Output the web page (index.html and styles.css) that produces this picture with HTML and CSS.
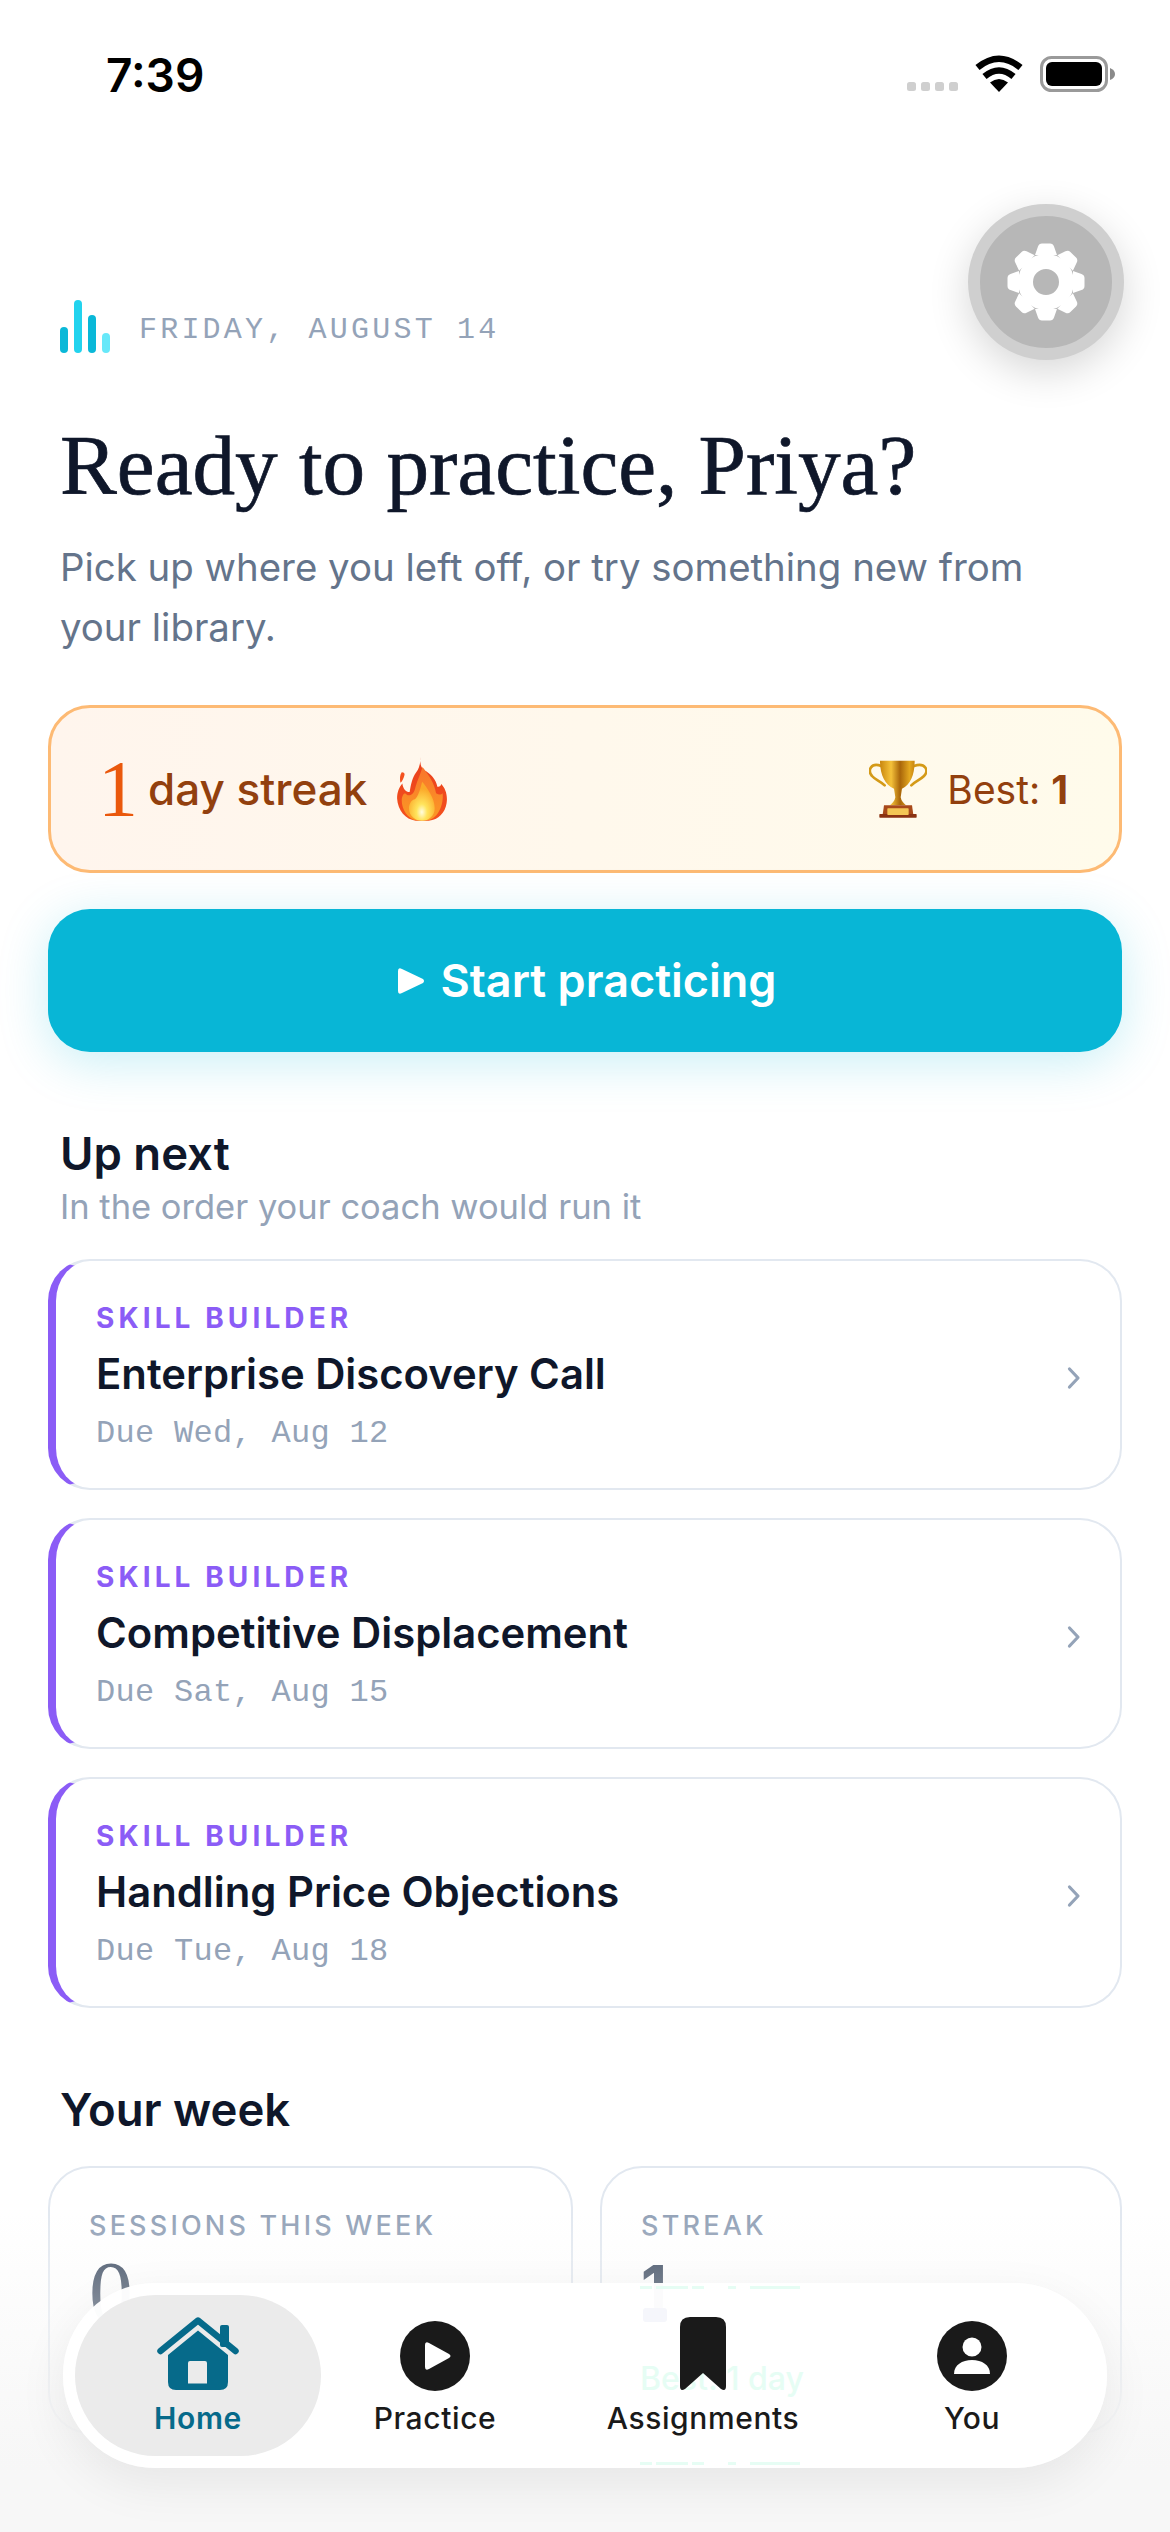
FILE: index.html
```html
<!DOCTYPE html>
<html lang="en">
<head>
    <meta charset="UTF-8">
    <meta name="viewport" content="width=device-width, initial-scale=1.0">
    <title>Home</title>
    <link rel="stylesheet" href="styles.css">
</head>
<body>

    <div class="screen">
        <!-- Status bar -->
        <div class="status-bar">
            <div class="time">7:39</div>
            <div class="status-icons">
                <svg class="signal" width="51" height="9" viewBox="0 0 51 9"><rect x="0" width="9" height="9" rx="2.5"/><rect x="14" width="9" height="9" rx="2.5"/><rect x="28" width="9" height="9" rx="2.5"/><rect x="42" width="9" height="9" rx="2.5"/></svg>
                <svg class="wifi" width="48" height="37" viewBox="0 0 48 37"><path d="M24 37 L15 27.5 Q24 20.5 33 27.5 Z" fill="#000"/><path d="M9.5 21.5 Q24 9.5 38.5 21.5" fill="none" stroke="#000" stroke-width="6.5"/><path d="M2.5 12.5 Q24 -5 45.5 12.5" fill="none" stroke="#000" stroke-width="6.5"/></svg>
                <svg class="battery" width="75" height="36" viewBox="0 0 75 36"><rect x="1.5" y="1.5" width="65" height="33" rx="10" fill="none" stroke="#9a9a9a" stroke-width="3"/><rect x="6" y="6" width="56" height="24" rx="6" fill="#000"/><path d="M70 12 Q75 14 75 18 Q75 22 70 24 Z" fill="#8a8a8a"/></svg>
            </div>
        </div>

        <div class="container">
            <div class="date-row">
                <div class="bars">
                    <span class="bar bar-a"></span>
                    <span class="bar bar-b"></span>
                    <span class="bar bar-c"></span>
                    <span class="bar bar-d"></span>
                </div>
                <div class="date">FRIDAY, AUGUST 14</div>
            </div>

            <h1>Ready to practice, Priya?</h1>
            <p class="intro">Pick up where you left off, or try something new from your library.</p>

            <!-- Streak -->
            <div class="streak">
                <div class="streak-left">
                    <span class="streak-num">1</span>
                    <span class="streak-text">day streak</span>
                    <svg class="fire" width="51" height="64" viewBox="55 50 152 194">
                        <defs>
                            <linearGradient id="flameOuter" x1="0" y1="0" x2="0" y2="1"><stop offset="0" stop-color="#e9401c"/><stop offset="1" stop-color="#f4511e"/></linearGradient>
                            <linearGradient id="flameMid" x1="0" y1="0" x2="0" y2="1"><stop offset="0" stop-color="#f8742c"/><stop offset="1" stop-color="#fb9a24"/></linearGradient>
                            <radialGradient id="flameCore" cx="0.5" cy="0.78" r="0.6"><stop offset="0" stop-color="#fffde0"/><stop offset="0.35" stop-color="#ffe45c"/><stop offset="1" stop-color="#fba92a"/></radialGradient>
                        </defs>
                        <path d="M126 50 C122 68 126 82 136 90 C156 100 172 118 176 140 C182 142 186 138 188 132 C200 145 208 165 204 190 C200 218 180 240 150 243 L110 243 C80 240 56 212 54 176 C54 156 60 142 70 130 C72 146 80 156 92 156 C96 132 100 112 112 96 C122 84 124 68 126 50Z" fill="url(#flameOuter)"/>
                        <path d="M68 96 C76 96 78 100 76 106 C74 114 70 124 64 128 C62 116 62 104 68 96Z" fill="#f4511e"/>
                        <path d="M131 80 C150 105 168 130 172 160 C180 165 188 165 192 160 C196 195 178 236 148 242 L112 242 C86 236 68 210 68 180 C70 165 76 155 84 165 C96 170 106 160 110 140 C116 118 126 100 131 80Z" fill="url(#flameMid)"/>
                        <path d="M130 125 C146 145 168 175 168 205 C168 228 150 243 130 243 C108 243 90 228 90 205 C90 190 100 178 108 178 C118 170 124 148 130 125Z" fill="url(#flameCore)"/>
                    </svg>
                </div>
                <div class="streak-right">
                    <svg class="trophy" width="58" height="58" viewBox="55 60 174 174">
                        <defs>
                            <linearGradient id="cupGold" x1="0" y1="0" x2="1" y2="0"><stop offset="0" stop-color="#c9860e"/><stop offset="0.32" stop-color="#f5c23a"/><stop offset="0.58" stop-color="#a9660a"/><stop offset="0.85" stop-color="#e3a71f"/><stop offset="1" stop-color="#c9860e"/></linearGradient>
                        </defs>
                        <path d="M92 78 C60 66 50 92 64 108 C74 120 90 124 102 136" fill="none" stroke="#d49a17" stroke-width="8" stroke-linecap="round"/>
                        <path d="M190 78 C224 66 236 92 220 108 C208 120 194 124 182 136" fill="none" stroke="#d49a17" stroke-width="8" stroke-linecap="round"/>
                        <path d="M88 62 L192 62 C192 104 180 134 154 146 L150 172 C152 184 160 190 166 196 L118 196 C124 190 132 184 134 172 L130 146 C102 134 88 104 88 62Z" fill="url(#cupGold)"/>
                        <path d="M100 196 H184 L188 224 H96 Z" fill="#a8491a"/>
                        <rect x="86" y="222" width="112" height="11" rx="2" fill="#8a3212"/>
                        <rect x="110" y="205" width="64" height="20" rx="2" fill="#f3c655"/>
                    </svg>
                    <span class="best">Best: <b>1</b></span>
                </div>
            </div>

            <button class="start-btn">
                <svg width="28" height="28" viewBox="0 0 28 28"><path d="M1 4 Q1 0 5 2 L26 12 Q28 14 26 16 L5 26 Q1 28 1 24 Z" fill="#fff"/></svg>
                Start practicing
            </button>

            <!-- Up next -->
            <h2 class="upnext-title">Up next</h2>
            <div class="upnext-sub">In the order your coach would run it</div>

            <div class="task-list">
                <div class="task">
                    <div>
                        <div class="task-kind">SKILL BUILDER</div>
                        <div class="task-name">Enterprise Discovery Call</div>
                        <div class="task-due">Due Wed, Aug 12</div>
                    </div>
                    <svg class="chev" width="14" height="24" viewBox="0 0 14 24"><path d="M2.5 3 L11 12 L2.5 21" fill="none" stroke="#94a3b8" stroke-width="3.2" stroke-linecap="round" stroke-linejoin="round"/></svg>
                </div>
                <div class="task">
                    <div>
                        <div class="task-kind">SKILL BUILDER</div>
                        <div class="task-name">Competitive Displacement</div>
                        <div class="task-due">Due Sat, Aug 15</div>
                    </div>
                    <svg class="chev" width="14" height="24" viewBox="0 0 14 24"><path d="M2.5 3 L11 12 L2.5 21" fill="none" stroke="#94a3b8" stroke-width="3.2" stroke-linecap="round" stroke-linejoin="round"/></svg>
                </div>
                <div class="task">
                    <div>
                        <div class="task-kind">SKILL BUILDER</div>
                        <div class="task-name">Handling Price Objections</div>
                        <div class="task-due">Due Tue, Aug 18</div>
                    </div>
                    <svg class="chev" width="14" height="24" viewBox="0 0 14 24"><path d="M2.5 3 L11 12 L2.5 21" fill="none" stroke="#94a3b8" stroke-width="3.2" stroke-linecap="round" stroke-linejoin="round"/></svg>
                </div>
            </div>

            <!-- Your week -->
            <h2 class="week-title">Your week</h2>
            <div class="week-grid">
                <div class="stat">
                    <div class="stat-label">SESSIONS THIS WEEK</div>
                    <div class="stat-value stat-serif">0</div>
                </div>
                <div class="stat">
                    <div class="stat-label">STREAK</div>
                    <div class="stat-value">1</div>
                </div>
            </div>
        </div>

        <!-- Settings button -->
        <button class="settings" aria-label="Settings">
            <svg width="80" height="80" viewBox="-40 -40 80 80">
                <defs><path id="tooth" d="M-11 -27 L-8 -35.500 Q-7 -38.500 -4 -38.500 L4 -38.500 Q7 -38.500 8 -35.500 L11 -27 Z" fill="#fff"/></defs>
                <use href="#tooth"/>
                <use href="#tooth" transform="rotate(45)"/>
                <use href="#tooth" transform="rotate(90)"/>
                <use href="#tooth" transform="rotate(135)"/>
                <use href="#tooth" transform="rotate(180)"/>
                <use href="#tooth" transform="rotate(225)"/>
                <use href="#tooth" transform="rotate(270)"/>
                <use href="#tooth" transform="rotate(315)"/>
                <circle r="20.500" fill="none" stroke="#fff" stroke-width="15"/>
            </svg>
        </button>

        <div class="bottom-fade"></div>

        <!-- Tab bar -->
        <nav class="tabbar">
            <svg class="ghost-slice ghost-top" width="162" height="3" viewBox="0 0 162 3"><path d="M0 0h12v3H0zM16 0h32v3H16zM52 0h12v3H52zM88 0h8v3h-8zM110 0h50v3h-50z"/></svg>
            <div class="ghost-chip"></div>
            <div class="ghost">Best: 1 day</div>
            <svg class="ghost-slice ghost-bottom" width="162" height="3" viewBox="0 0 162 3"><path d="M0 0h12v3H0zM16 0h32v3H16zM52 0h12v3H52zM88 0h8v3h-8zM110 0h50v3h-50z"/></svg>

            <a class="tab active">
                <svg width="82" height="74" viewBox="0 0 82 74">
                    <rect x="63" y="8" width="9" height="22" rx="2" fill="#066a8a"/>
                    <path d="M3.500 34 L41 3.500 L78.500 34" fill="none" stroke="#066a8a" stroke-width="6.500" stroke-linecap="round" stroke-linejoin="round"/>
                    <path d="M41 13.500 L71 38 V65 Q71 73 63 73 H19 Q11 73 11 65 V38 Z M33 44 Q31 44 31 46 V66.500 H50 V46 Q50 44 48 44 Z" fill="#066a8a" fill-rule="evenodd"/>
                </svg>
                <span>Home</span>
            </a>
            <a class="tab">
                <svg width="70" height="70" viewBox="0 0 70 70"><circle cx="35" cy="35" r="35" fill="#1a1a1a"/><path d="M25 24 Q25 20 29 22 L49 33 Q52 35 49 37 L29 48 Q25 50 25 46 Z" fill="#fff"/></svg>
                <span>Practice</span>
            </a>
            <a class="tab">
                <svg width="46" height="74" viewBox="0 0 46 74"><path d="M0 10 Q0 0 10 0 H36 Q46 0 46 10 V69 Q46 75 41 72 L23 56 L5 72 Q0 75 0 69 Z" fill="#1a1a1a"/></svg>
                <span>Assignments</span>
            </a>
            <a class="tab">
                <svg width="70" height="70" viewBox="0 0 70 70"><circle cx="35" cy="35" r="35" fill="#1a1a1a"/><circle cx="35" cy="26" r="9.500" fill="#fff"/><path d="M17 53 C17 44 25 39 35 39 C45 39 53 44 53 53 Z" fill="#fff"/></svg>
                <span>You</span>
            </a>
        </nav>
    </div>

</body>
</html>
```

FILE: styles.css
```css
* {
    margin: 0;
    padding: 0;
    box-sizing: border-box;
    font-family: Inter, "Noto Sans", sans-serif;
}

body {
    background-color: #fff;
}

.screen {
    position: relative;
    width: 1170px;
    height: 2532px;
    overflow: hidden;
    background: #fff;
}

/* Status bar */
.status-bar {
    display: flex;
    justify-content: space-between;
    align-items: flex-start;
    height: 140px;
    padding: 50px 55px 0 106px;
}

.time {
    font-size: 46px;
    font-weight: 600;
    line-height: 50px;
    color: #000;
}

.status-icons {
    display: flex;
    align-items: flex-end;
    gap: 17px;
    padding-top: 5px;
}

.signal {
    fill: #cfcfcf;
    margin-bottom: 1px;
}

.container {
    padding: 0 48px;
}

/* Heading */
.date-row {
    display: flex;
    align-items: flex-end;
    height: 60px;
    margin-top: 153px;
    padding-left: 12px;
}

.bars {
    display: flex;
    align-items: flex-end;
    gap: 6px;
    height: 54px;
}

.bar {
    width: 8px;
    border-radius: 4px;
}

.bar-a { height: 26px; background: #0ab8d8; }
.bar-b { height: 53px; background: #22d3ee; }
.bar-c { height: 38px; background: #0ab8d8; }
.bar-d { height: 20px; background: #67e8f9; }

.date {
    margin-left: 29px;
    margin-bottom: 3px;
    font-family: "Liberation Mono", monospace;
    font-size: 30px;
    letter-spacing: 3.2px;
    line-height: 40px;
    color: #94a3b8;
}

h1 {
    margin-top: 62px;
    padding-left: 12px;
    font-family: "Liberation Serif", serif;
    font-size: 85.2px;
    font-weight: 400;
    line-height: 100px;
    color: #0f172a;
    -webkit-text-stroke: 0.7px #0f172a;
}

.intro {
    margin-top: 22px;
    padding: 0 80px 0 12px;
    font-size: 38.4px;
    line-height: 60px;
    color: #64748b;
}

/* Streak card */
.streak {
    display: flex;
    justify-content: space-between;
    align-items: center;
    height: 168px;
    margin-top: 48px;
    padding: 0 51px 0 47px;
    border: 3px solid #fdba74;
    border-radius: 42px;
    background: linear-gradient(to right, #fff5ed, #fffbeb);
}

.streak-left, .streak-right {
    display: flex;
    align-items: center;
}

.streak-num {
    font-family: "Liberation Serif", serif;
    font-size: 80px;
    line-height: 90px;
    color: #ea580c;
}

.streak-text {
    margin-left: 10px;
    font-size: 44px;
    font-weight: 500;
    color: #92400e;
}

.fire {
    margin-left: 30px;
}

.best {
    margin-left: 20px;
    font-size: 39px;
    color: #92400e;
}

.best b {
    font-weight: 700;
}

/* Main button */
.start-btn {
    display: flex;
    justify-content: center;
    align-items: center;
    gap: 15px;
    width: 100%;
    height: 143px;
    margin-top: 36px;
    padding-left: 4px;
    border: none;
    border-radius: 42px;
    background-color: #08b6d6;
    box-shadow: 0 10px 50px rgba(6, 182, 212, 0.22);
    color: white;
    font-size: 45px;
    font-weight: 600;
}

/* Up next */
.upnext-title, .week-title {
    padding-left: 12px;
    font-size: 45.5px;
    font-weight: 600;
    line-height: 56px;
    color: #0f172a;
}

.upnext-title {
    margin-top: 74px;
}

.upnext-sub {
    padding-left: 12px;
    margin-top: 3px;
    font-size: 34.5px;
    line-height: 44px;
    color: #94a3b8;
}

.task-list {
    display: flex;
    flex-direction: column;
    gap: 28px;
    margin-top: 30px;
}

.task {
    display: flex;
    justify-content: space-between;
    align-items: center;
    height: 231px;
    padding: 6px 39px 0 40px;
    border: 2px solid #e2e8f0;
    border-left: 8px solid #8b5cf6;
    border-radius: 42px;
    background: white;
}

.task-kind {
    font-size: 28px;
    font-weight: 700;
    letter-spacing: 4.1px;
    line-height: 34px;
    color: #8b5cf6;
}

.task-name {
    margin-top: 13px;
    font-size: 41.8px;
    font-weight: 600;
    line-height: 52px;
    color: #0f172a;
}

.task-due {
    margin-top: 14px;
    font-family: "Liberation Mono", monospace;
    font-size: 32px;
    letter-spacing: 0.3px;
    line-height: 40px;
    color: #94a3b8;
}

/* Your week */
.week-title {
    margin-top: 74px;
}

.week-grid {
    display: grid;
    grid-template-columns: 525px 522px;
    gap: 27px;
    margin-top: 28px;
}

.stat {
    height: 268px;
    padding: 41px 39px;
    border: 2px solid #e2e8f0;
    border-radius: 42px;
    background: white;
}

.stat-label {
    font-size: 27px;
    font-weight: 500;
    letter-spacing: 3.2px;
    line-height: 34px;
    color: #94a3b8;
}

.stat-value {
    margin-top: 10px;
    font-size: 60px;
    font-weight: 700;
    line-height: 68px;
    color: #3b4a60;
}

.stat-serif {
    margin-top: 5px;
    font-family: "Liberation Serif", serif;
    font-weight: 400;
    font-size: 88px;
    line-height: 90px;
}

/* Floating items */
.settings {
    position: absolute;
    top: 204px;
    left: 968px;
    display: flex;
    justify-content: center;
    align-items: center;
    width: 156px;
    height: 156px;
    border: 12px solid #cfcfcf;
    border-radius: 50%;
    background: #b7b7b7;
    box-shadow: 0 12px 40px rgba(0, 0, 0, 0.16);
}

.bottom-fade {
    position: absolute;
    left: 0;
    right: 0;
    bottom: 0;
    height: 400px;
    background: linear-gradient(to bottom, rgba(247, 247, 247, 0) 20%, rgba(247, 247, 247, 0.25) 35%, rgba(247, 247, 247, 0.9) 75%, #f7f7f7 85%);
}

.tabbar {
    position: absolute;
    left: 63px;
    top: 2283px;
    display: grid;
    grid-template-columns: 246px 228px 308px 230px;
    width: 1044px;
    height: 185px;
    padding: 12px;
    border-radius: 92px;
    background: rgba(255, 255, 255, 0.97);
    box-shadow: 0 16px 50px rgba(0, 0, 0, 0.07);
}

.tab {
    position: relative;
    display: flex;
    flex-direction: column;
    justify-content: flex-end;
    align-items: center;
    height: 161px;
    padding-bottom: 18px;
    border-radius: 81px;
    font-size: 30px;
    font-weight: 450;
    letter-spacing: 0.6px;
    line-height: 40px;
    color: #1a1a1a;
}

.tab svg {
    margin-bottom: 7px;
}

.tab.active {
    background: #ebebeb;
    color: #066a8a;
    font-weight: 600;
}

/* Faint bleed-through of the card behind the bar */
.ghost {
    position: absolute;
    left: 577px;
    top: 76px;
    font-size: 32px;
    font-weight: 500;
    line-height: 40px;
    white-space: nowrap;
    color: #e6fdf4;
}

.ghost-slice {
    position: absolute;
    left: 577px;
    fill: #e6fdf4;
}

.ghost-top { top: 3px; }
.ghost-bottom { top: 179px; }

.ghost-chip {
    position: absolute;
    left: 580px;
    top: 25px;
    width: 24px;
    height: 14px;
    border-radius: 3px;
    background: #f5f6fb;
}
```
